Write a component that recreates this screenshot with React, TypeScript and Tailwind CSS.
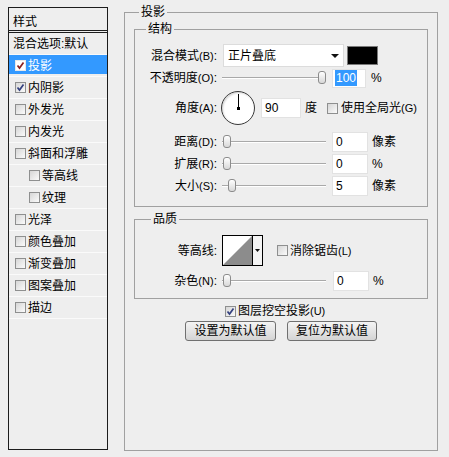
import React from "react";

const font = "font-['Liberation_Sans','Noto_Sans_CJK_SC',sans-serif]";

function Check({ checked, light }: { checked?: boolean; light?: boolean }) {
  return (
    <span
      className={`flex h-[11px] w-[11px] shrink-0 items-center justify-center border ${
        light
          ? "border-[#e8e8e8] bg-white"
          : "border-[#8e8f8f] bg-gradient-to-br from-[#d6d6d6] to-[#fbfbfb]"
      }`}
    >
      {checked && (
        <svg width="9" height="9" viewBox="0 0 9 9">
          <path
            d="M1.5 4.5 L3.5 7 L7.5 1.5"
            fill="none"
            stroke={light ? "#8a2020" : "#34417f"}
            strokeWidth="1.7"
          />
        </svg>
      )}
    </span>
  );
}

function Label({ cn, en }: { cn: string; en?: string }) {
  return (
    <span className="w-[82px] shrink-0 text-right whitespace-nowrap">
      {cn}
      {en && <span className="text-[11px]">({en})</span>}:
    </span>
  );
}

function Slider({ value, max }: { value: number; max: number }) {
  const width = 104;
  const left = Math.round((value / max) * (width - 9)) + 1;
  return (
    <div className="relative ml-[5px] flex h-[16px] w-[104px] shrink-0 items-center">
      <div className="h-[2px] w-full border-t border-b border-t-[#a9a9a9] border-b-white" />
      <span
        className="absolute top-[1px] h-[13px] w-[8px] rounded-[3px] border border-[#8c8c8c] bg-gradient-to-b from-white to-[#d8d8d8]"
        style={{ left }}
      />
    </div>
  );
}

function NumBox({ v, w, ml }: { v: string; w: string; ml: string }) {
  return (
    <span
      className={`${w} ${ml} flex h-[20px] shrink-0 items-center border border-[#e2e2e2] bg-white pl-[3px] text-[12px]`}
    >
      {v}
    </span>
  );
}

const layers: { name: string; checked?: boolean; sub?: boolean; active?: boolean }[] = [
  { name: "投影", checked: true, active: true },
  { name: "内阴影", checked: true },
  { name: "外发光" },
  { name: "内发光" },
  { name: "斜面和浮雕" },
  { name: "等高线", sub: true },
  { name: "纹理", sub: true },
  { name: "光泽" },
  { name: "颜色叠加" },
  { name: "渐变叠加" },
  { name: "图案叠加" },
  { name: "描边" },
];

export default function App() {
  return (
    <div className={`${font} flex h-[457px] w-[449px] bg-[#eeeeee] text-[12px] leading-none text-black`}>
      {/* Styles list */}
      <div className="mt-[7px] ml-[8px] flex h-[443px] w-[100px] shrink-0 flex-col border border-[#1c1c1c]">
        <div className="flex h-[22px] items-center pt-[6px] pl-[4px]">样式</div>
        <div className="h-[3px] border-y border-[#1c1c1c]" />
        <div className="flex h-[22px] items-center border-b border-[#fafafa] pl-[4px]">混合选项:默认</div>
        {layers.map((l) => (
          <div
            key={l.name}
            className={`flex h-[22px] items-center gap-[2px] border-b border-[#fafafa] ${
              l.sub ? "pl-[20px]" : "pl-[6px]"
            } ${l.active ? "bg-[#3399ff] text-white shadow-[inset_0_-2px_0_#eeeeee]" : ""}`}
          >
            <Check checked={l.checked} light={l.active} />
            <span>{l.name}</span>
          </div>
        ))}
      </div>

      {/* Drop shadow panel */}
      <div className="relative mt-[12px] ml-[16px] h-[439px] w-[314px] shrink-0 border border-[#a0a0a0]">
        <span className="absolute top-[-9px] left-[14px] bg-[#eeeeee] px-[2px] leading-[17px]">投影</span>

        <fieldset className="mt-[8px] ml-[9px] w-[294px] border border-[#a0a0a0] pb-[9px]">
          <legend className="ml-[11px] px-[2px] leading-[17px]">结构</legend>

          <div className="mt-[6px] flex h-[23px] items-center">
            <Label cn="混合模式" en="B" />
            <div className="ml-[6px] flex h-[23px] w-[121px] items-center justify-between border border-[#dcdcdc] bg-white pr-[4px] pl-[4px]">
              <span>正片叠底</span>
              <svg width="8" height="6" viewBox="0 0 8 6">
                <path d="M0 1 H8 L4 5 Z" fill="#111" />
              </svg>
            </div>
            <span className="ml-[3px] h-[19px] w-[31px] border border-[#7a7a7a] bg-black" />
          </div>

          <div className="flex h-[22px] items-center">
            <Label cn="不透明度" en="O" />
            <Slider value={100} max={100} />
            <span className="ml-[6px] flex h-[19px] w-[34px] items-center border border-[#e2e2e2] bg-white pl-[2px]">
              <span className="bg-[#3399ff] px-[1px] py-[2px] text-white">100</span>
            </span>
            <span className="ml-[5px]">%</span>
          </div>

          <div className="flex h-[38px] items-center">
            <Label cn="角度" en="A" />
            <div className="relative ml-[4px] h-[34px] w-[34px] shrink-0 rounded-full border border-[#3a3a3a] bg-white shadow-[inset_1px_1px_2px_#cfcfcf]">
              <span className="absolute top-[2px] left-[16px] h-[15px] w-[1px] bg-black" />
              <span className="absolute top-[15px] left-[15px] h-[3px] w-[3px] bg-black" />
            </div>
            <NumBox v="90" w="w-[40px]" ml="ml-[6px]" />
            <span className="ml-[4px]">度</span>
            <span className="ml-[10px]">
              <Check />
            </span>
            <span className="ml-[3px] whitespace-nowrap">
              使用全局光<span className="text-[11px]">(G)</span>
            </span>
          </div>

          <div className="mt-[4px] flex h-[22px] items-center">
            <Label cn="距离" en="D" />
            <Slider value={0} max={100} />
            <NumBox v="0" w="w-[36px]" ml="ml-[6px]" />
            <span className="ml-[4px]">像素</span>
          </div>
          <div className="flex h-[22px] items-center">
            <Label cn="扩展" en="R" />
            <Slider value={0} max={100} />
            <NumBox v="0" w="w-[36px]" ml="ml-[6px]" />
            <span className="ml-[4px]">%</span>
          </div>
          <div className="flex h-[22px] items-center">
            <Label cn="大小" en="S" />
            <Slider value={5} max={100} />
            <NumBox v="5" w="w-[36px]" ml="ml-[6px]" />
            <span className="ml-[4px]">像素</span>
          </div>
        </fieldset>

        <fieldset className="mt-[4px] ml-[9px] w-[294px] border border-[#a0a0a0] pb-[7px]">
          <legend className="ml-[16px] px-[2px] leading-[17px]">品质</legend>
          <div className="mt-[7px] flex h-[31px] items-center">
            <Label cn="等高线" />
            <div className="ml-[5px] flex h-[31px] w-[41px] border border-black bg-white">
              <svg width="29" height="29" viewBox="0 0 29 29" className="shrink-0">
                <path d="M0 29 L29 0 L29 29 Z" fill="#8c8c8c" />
              </svg>
              <div className="flex flex-1 items-center justify-center border-l border-black bg-[#f4f4f4]">
                <svg width="5" height="3" viewBox="0 0 5 3">
                  <path d="M0 0 H5 L2.5 3 Z" fill="#111" />
                </svg>
              </div>
            </div>
            <span className="ml-[14px]">
              <Check />
            </span>
            <span className="ml-[2px] whitespace-nowrap">
              消除锯齿<span className="text-[11px]">(L)</span>
            </span>
          </div>
          <div className="mt-[5px] flex h-[20px] items-center">
            <Label cn="杂色" en="N" />
            <Slider value={0} max={100} />
            <NumBox v="0" w="w-[36px]" ml="ml-[7px]" />
            <span className="ml-[4px]">%</span>
          </div>
        </fieldset>

        <div className="mt-[5px] flex h-[14px] items-center gap-[2px] pl-[100px]">
          <Check checked />
          <span className="whitespace-nowrap">
            图层挖空投影<span className="text-[11px]">(U)</span>
          </span>
        </div>

        <div className="mt-[3px] flex gap-[11px] pl-[60px]">
          <button className="flex h-[20px] w-[91px] items-center justify-center rounded-[3px] border border-[#707070] bg-gradient-to-b from-[#f4f4f4] to-[#d4d4d4] text-[12px]">
            设置为默认值
          </button>
          <button className="flex h-[20px] w-[90px] items-center justify-center rounded-[3px] border border-[#707070] bg-gradient-to-b from-[#f4f4f4] to-[#d4d4d4] text-[12px]">
            复位为默认值
          </button>
        </div>
      </div>
    </div>
  );
}
